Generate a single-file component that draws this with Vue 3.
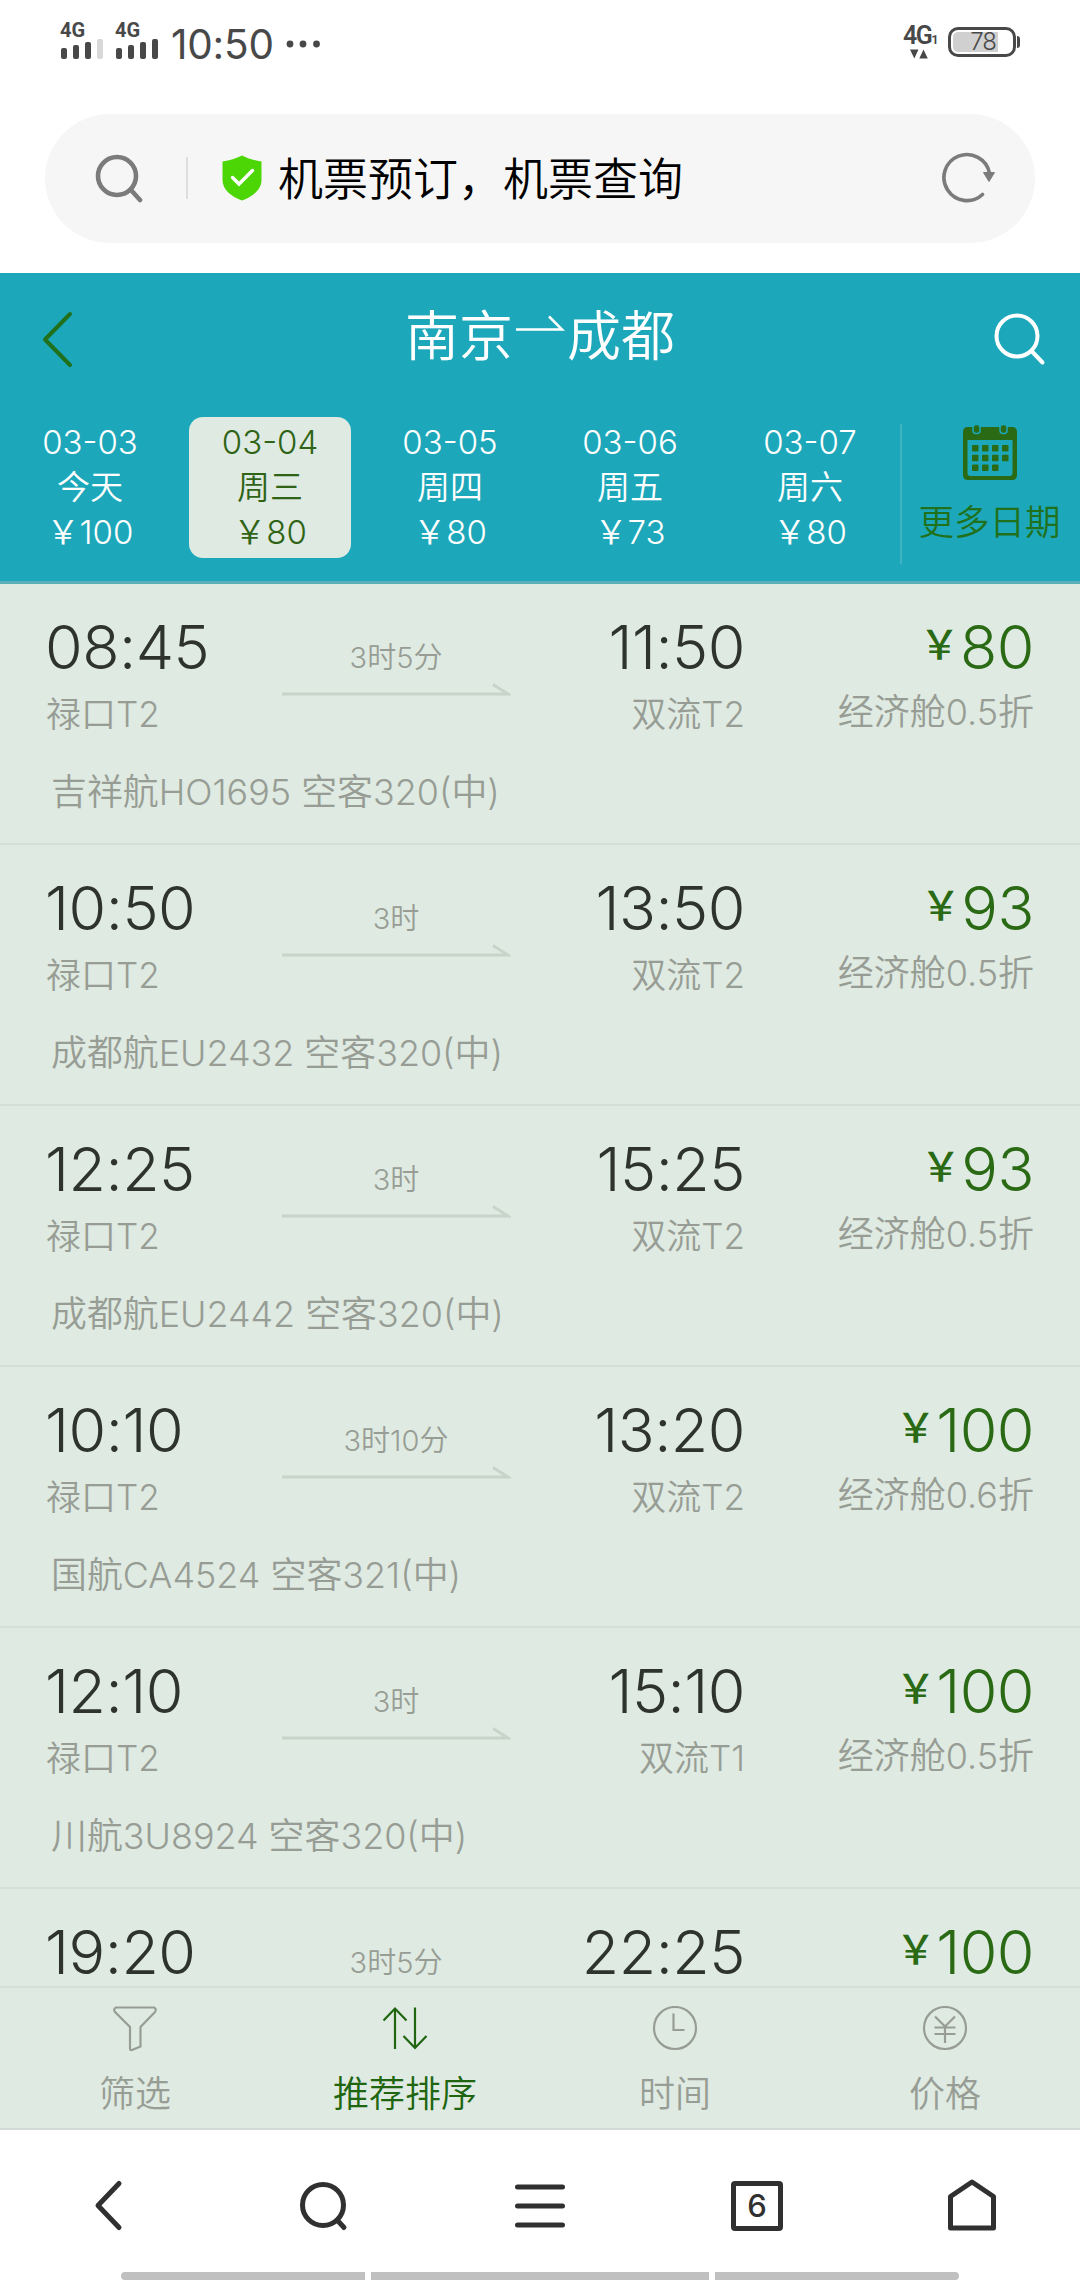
<template>
  <div class="tela">
    <!-- status bar -->
    <div class="status">
      <div class="sinal">
        <span>4G</span>
        <svg width="44" height="21" viewBox="0 0 44 21">
          <rect x="1" y="10" width="6" height="11" rx="2" />
          <rect x="13" y="7" width="6" height="14" rx="2" />
          <rect x="25" y="4" width="6" height="17" rx="2" />
          <rect x="37" y="1" width="6" height="20" rx="2" class="fraco" />
        </svg>
      </div>
      <div class="sinal segundo">
        <span>4G</span>
        <svg width="44" height="21" viewBox="0 0 44 21">
          <rect x="1" y="10" width="6" height="11" rx="2" />
          <rect x="13" y="7" width="6" height="14" rx="2" />
          <rect x="25" y="4" width="6" height="17" rx="2" />
          <rect x="37" y="1" width="6" height="20" rx="2" />
        </svg>
      </div>
      <div class="relogio">10:50</div>
      <svg class="pontos" width="34" height="8" viewBox="0 0 34 8">
        <circle cx="4" cy="4" r="3.4" />
        <circle cx="17" cy="4" r="3.4" />
        <circle cx="30.5" cy="4" r="3.4" />
      </svg>
      <div class="rede">
        <div class="rede-texto">4G<small>1</small></div>
        <svg width="18" height="10" viewBox="0 0 18 10">
          <path d="M0 0.5h8.5L4.3 9.5zM9.300 9.500h8.500L13.500 0.500z" />
        </svg>
      </div>
      <div class="bateria">
        <span>78</span>
      </div>
      <div class="polo"></div>
    </div>

    <!-- address bar -->
    <div class="barra">
      <svg class="lupa" width="50" height="50" viewBox="0 0 50 50" fill="none" stroke="#7b7b7b" stroke-width="4.600" stroke-linecap="round">
        <circle cx="22" cy="23" r="19" />
        <path d="M36 37L45 47" />
      </svg>
      <div class="divisor"></div>
      <svg class="escudo" width="40" height="46" viewBox="0 0 40 46">
        <path d="M20 0.500C14 3.500 8 5.500 0.500 6.500V25C0.500 35 10 42 20 45.500C30 42 39.500 35 39.500 25V6.500C32 5.500 26 3.500 20 0.500z" fill="#4cd606" />
        <path d="M10.500 22.500L17 29L30.500 15.500" fill="none" stroke="#fff" stroke-width="3.400" stroke-linecap="round" />
      </svg>
      <div class="endereco">机票预订，机票查询</div>
      <svg class="recarregar" width="54" height="52" viewBox="0 0 54 52">
        <path d="M40.500 42.500A23 23 0 1 1 47.500 21" fill="none" stroke="#7b7b7b" stroke-width="3.600" stroke-linecap="round" />
        <path d="M41.500 20.500H52.500L47 29.500z" fill="#7b7b7b" stroke="#7b7b7b" stroke-linejoin="round" />
      </svg>
    </div>

    <!-- header -->
    <div class="topo">
      <div class="titulo">
        <svg width="34" height="58" viewBox="0 0 34 58" fill="none" stroke="#20701c" stroke-width="4" stroke-linecap="round" stroke-linejoin="round">
          <path d="M29 4L4 29.500L29 55" />
        </svg>
        <h1>
          南京<svg width="54" height="54" viewBox="0 0 54 54" fill="none" stroke="#fff" stroke-width="2.500">
            <path d="M3 23.500H49L36 10.500" />
          </svg>成都
        </h1>
        <svg width="54" height="54" viewBox="0 0 54 54" fill="none" stroke="#fff" stroke-width="4" stroke-linecap="round">
          <circle cx="23" cy="24" r="20.500" />
          <path d="M38 39.500L48.500 50.500" />
        </svg>
      </div>
      <div class="datas">
        <div v-for="(d, i) in datas" :key="d.dia" class="data" :class="{ ativa: i === 1 }">
          <div>{{ d.dia }}</div>
          <div class="semana">{{ d.semana }}</div>
          <div>￥{{ d.preco }}</div>
        </div>
        <div class="mais">
          <svg width="54" height="56" viewBox="0 0 54 56">
            <path fill-rule="evenodd" d="M5 3H49Q54 3 54 8V51Q54 56 49 56H5Q0 56 0 51V8Q0 3 5 3zM4.500 16V49Q4.500 52 7.500 52H46.500Q49.500 52 49.500 49V16z" />
            <g stroke="#1ca8ba" stroke-width="1.500">
              <rect x="10" y="0.500" width="7" height="9" rx="3" />
              <rect x="37" y="0.500" width="7" height="9" rx="3" />
            </g>
            <rect v-for="n in 11" :key="n" :x="9 + ((n - 1) % 4) * 10" :y="21 + Math.floor((n - 1) / 4) * 9.700" width="6.500" height="6.500" rx="1" />
          </svg>
          <div>更多日期</div>
        </div>
      </div>
    </div>

    <!-- flights -->
    <div class="lista">
      <div v-for="v in voos" :key="v.saida" class="voo">
        <div>
          <div class="hora">{{ v.saida }}</div>
          <div v-if="v.aviao" class="local">禄口T2</div>
        </div>
        <div class="duracao">
          <div>{{ v.duracao }}</div>
          <svg v-if="v.aviao" width="230" height="14" viewBox="0 0 230 14" fill="none" stroke="#c8d3ca" stroke-width="2.800">
            <path d="M1 11H227L212 1.500" />
          </svg>
        </div>
        <div class="direita">
          <div class="hora">{{ v.chegada }}</div>
          <div v-if="v.aviao" class="local">双流{{ v.terminal }}</div>
        </div>
        <div class="direita">
          <div class="hora preco"><span>￥</span>{{ v.preco }}</div>
          <div v-if="v.aviao" class="local classe">经济舱{{ v.desconto }}折</div>
        </div>
        <div v-if="v.aviao" class="aviao">{{ v.aviao }}</div>
      </div>
    </div>

    <!-- filters -->
    <div class="filtros">
      <div>
        <svg width="46" height="46" viewBox="0 0 46 46">
          <path d="M4 1.500H42Q45 3 43 6L28.500 21V40.500L20 44Q18 44.500 18 42.500V21L3 6Q1 3 4 1.500z" />
        </svg>
        <span>筛选</span>
      </div>
      <div class="ativo">
        <svg width="46" height="46" viewBox="0 0 46 46">
          <path d="M1.500 14.500L13 2.500L24.500 14.500M13 2.500V43M21.500 30L33 42L44.500 30M33 42V1.500" />
        </svg>
        <span>推荐排序</span>
      </div>
      <div>
        <svg width="46" height="46" viewBox="0 0 46 46">
          <circle cx="23" cy="22" r="21" />
          <path d="M21.500 7.500V24H32.500" />
        </svg>
        <span>时间</span>
      </div>
      <div>
        <svg width="46" height="46" viewBox="0 0 46 46">
          <circle cx="23" cy="22" r="21" />
          <path d="M13 10.500L23 20.500L33 10.500M12.500 21.500H33.500M12.500 28H33.500M23 20.500V37" />
        </svg>
        <span>价格</span>
      </div>
    </div>

    <!-- browser navigation -->
    <div class="navegador">
      <svg width="60" height="60" viewBox="0 0 60 60">
        <path d="M41 7.500L20 29.500L41 51.500" />
      </svg>
      <svg width="60" height="60" viewBox="0 0 60 60">
        <circle cx="29" cy="29" r="20.500" />
        <path d="M43.500 44.500L50 51.500" />
      </svg>
      <svg width="60" height="60" viewBox="0 0 60 60">
        <path d="M7.500 11H52.500M7.500 30H52.500M7.500 49H52.500" />
      </svg>
      <div class="abas"><span>6</span></div>
      <svg width="60" height="60" viewBox="0 0 60 60">
        <path d="M8.500 52V20.500L30 6L51.500 20.500V52z" />
      </svg>
    </div>
    <div class="gestos">
      <i></i><i class="meio"></i><i></i>
    </div>
  </div>
</template>

<script setup>
const datas = [
  { dia: '03-03', semana: '今天', preco: 100 },
  { dia: '03-04', semana: '周三', preco: 80 },
  { dia: '03-05', semana: '周四', preco: 80 },
  { dia: '03-06', semana: '周五', preco: 73 },
  { dia: '03-07', semana: '周六', preco: 80 },
];

// o último voo só mostra a primeira linha
const voos = [
  { saida: '08:45', chegada: '11:50', duracao: '3时5分', terminal: 'T2', preco: 80, desconto: '0.5', aviao: '吉祥航HO1695 空客320(中)' },
  { saida: '10:50', chegada: '13:50', duracao: '3时', terminal: 'T2', preco: 93, desconto: '0.5', aviao: '成都航EU2432 空客320(中)' },
  { saida: '12:25', chegada: '15:25', duracao: '3时', terminal: 'T2', preco: 93, desconto: '0.5', aviao: '成都航EU2442 空客320(中)' },
  { saida: '10:10', chegada: '13:20', duracao: '3时10分', terminal: 'T2', preco: 100, desconto: '0.6', aviao: '国航CA4524 空客321(中)' },
  { saida: '12:10', chegada: '15:10', duracao: '3时', terminal: 'T1', preco: 100, desconto: '0.5', aviao: '川航3U8924 空客320(中)' },
  { saida: '19:20', chegada: '22:25', duracao: '3时5分', preco: 100 },
];
</script>

<style>
body {
  background: #fff;
}
</style>

<style scoped>
.tela {
  width: 1080px;
  height: 2280px;
  overflow: hidden;
  display: flex;
  flex-direction: column;
  background: #fff;
  font-family: Inter, 'Noto Sans CJK SC', sans-serif;
  font-weight: 350;
}

svg {
  flex: none;
  display: block;
}

/* status bar */
.status {
  height: 114px;
  padding: 0 60px;
  box-sizing: border-box;
  display: flex;
  align-items: flex-start;
  color: #484848;
  fill: #484848;
}

.sinal {
  padding-top: 20px;
}

.sinal span {
  display: block;
  height: 18px;
  line-height: 21px;
  font-family: Roboto, sans-serif;
  font-size: 20px;
  font-weight: 700;
}

.segundo {
  margin-left: 11px;
}

.fraco {
  fill: #d8d8d8;
}

.relogio {
  margin: 20px 0 0 12px;
  width: 104px;
  line-height: 50px;
  font-size: 40.5px;
  font-weight: 400;
  letter-spacing: -0.2px;
  white-space: nowrap;
}

.pontos {
  margin: 40px 0 0 11px;
}

.rede {
  margin: 24px 0 0 auto;
  width: 37px;
}

.rede-texto {
  height: 23px;
  line-height: 24px;
  font-family: Roboto, sans-serif;
  font-size: 25px;
  font-weight: 600;
  letter-spacing: -1.5px;
  white-space: nowrap;
}

.rede-texto small {
  font-size: 13px;
}

.rede svg {
  margin: 2px 0 0 7px;
}

.bateria {
  margin: 27px 0 0 8px;
  width: 68px;
  height: 30px;
  box-sizing: border-box;
  border: 3px solid #484848;
  border-radius: 10px;
  padding: 2px;
}

.bateria span {
  display: block;
  width: 45px;
  height: 20px;
  box-sizing: border-box;
  padding-right: 2px;
  border-radius: 5px 0 0 5px;
  background: #d0d0d0;
  text-align: right;
  line-height: 20px;
  font-size: 24px;
  letter-spacing: -1px;
}

.polo {
  margin: 36px 0 0 1px;
  width: 3px;
  height: 12px;
  border-radius: 0 3px 3px 0;
  background: #484848;
}

/* address bar */
.barra {
  height: 129px;
  margin: 0 45px 30px;
  border-radius: 65px;
  background: #f6f6f6;
  display: flex;
  align-items: center;
}

.lupa {
  margin-left: 50px;
}

.divisor {
  width: 2px;
  height: 42px;
  margin: 0 34px 0 41px;
  background: #dedede;
}

.endereco {
  flex: 1;
  margin-left: 16px;
  padding-bottom: 4px;
  font-size: 45px;
  color: #000;
}

.recarregar {
  margin-right: 39px;
}

/* header */
.topo {
  height: 312px;
  box-sizing: border-box;
  border-bottom: 3px solid #5cafb9;
  background: #1ca8ba;
  color: #fff;
}

.titulo {
  height: 132px;
  padding: 0 32px 0 41px;
  display: flex;
  align-items: center;
  justify-content: space-between;
}

.titulo h1 {
  margin: 0;
  padding: 0 0 12px 11px;
  display: flex;
  align-items: center;
  font-size: 54px;
  font-weight: 350;
}

.datas {
  display: flex;
  padding-top: 12px;
}

.data {
  width: 162px;
  height: 141px;
  margin: 0 9px;
  box-sizing: border-box;
  padding-top: 3px;
  border-radius: 14px;
  text-align: center;
  font-size: 33px;
  line-height: 45px;
}

.ativa {
  background: #dfeae2;
  color: #2f6416;
}

.mais {
  flex: 1;
  height: 140px;
  margin-top: 7px;
  padding-right: 3px;
  border-left: 2px solid #3fb3c4;
  display: flex;
  flex-direction: column;
  align-items: center;
  color: #20701c;
  fill: #2a6a14;
  font-size: 35.5px;
  line-height: 44px;
}

.mais div {
  margin-top: 21px;
}

/* flights */
.lista {
  height: 1402px;
  background: #dfeae2;
}

.voo {
  height: 261px;
  box-sizing: border-box;
  padding: 28px 46px 0;
  border-bottom: 2px solid #d4dfd8;
  display: grid;
  grid-template-columns: 200px 300px 199px 289px;
  grid-template-rows: 142px auto;
}

.voo:last-child {
  height: 97px;
  border-bottom: 0;
  grid-template-rows: auto;
}

.hora {
  margin-left: -1px;
  font-size: 61px;
  font-weight: 330;
  line-height: 70px;
  color: #2e332d;
  letter-spacing: -0.5px;
}

.local {
  margin-top: 10px;
  font-size: 35px;
  line-height: 44px;
  color: #979d94;
}

.direita {
  text-align: right;
}

.preco {
  display: flex;
  justify-content: flex-end;
  color: #2a6a14;
}

.preco span {
  margin-right: 1px;
  font-size: 40px;
  font-weight: 500;
  line-height: 65px;
}

.classe {
  margin-top: 8px;
  font-size: 36px;
}

.duracao {
  padding-top: 27px;
  display: flex;
  flex-direction: column;
  align-items: center;
  font-size: 29px;
  line-height: 38px;
  color: #979d94;
}

.duracao svg {
  margin-top: 6px;
}

.aviao {
  grid-column: 1 / -1;
  padding-left: 5px;
  font-size: 35.9px;
  line-height: 76px;
  color: #979d94;
}

/* filters */
.filtros {
  height: 144px;
  box-sizing: border-box;
  border-top: 2px solid #d4dfd8;
  border-bottom: 2px solid #d3d9d5;
  background: #dfeae2;
  display: flex;
}

.filtros div {
  width: 270px;
  padding-top: 18px;
  display: flex;
  flex-direction: column;
  align-items: center;
  color: #979d94;
  font-size: 36px;
  line-height: 44px;
}

.filtros svg {
  fill: none;
  stroke: currentColor;
  stroke-width: 2.200;
}

.filtros span {
  margin-top: 20px;
}

.filtros .ativo {
  color: #20650f;
}

/* browser navigation */
.navegador {
  height: 142px;
  display: flex;
  align-items: center;
  justify-content: space-around;
  padding: 10px 0 0;
  box-sizing: border-box;
}

.navegador svg {
  margin: 0 78px;
  fill: none;
  stroke: #303030;
  stroke-width: 5;
  stroke-linecap: round;
  stroke-linejoin: round;
}

.abas {
  flex: none;
  width: 52px;
  height: 50px;
  margin: 0 81px 0 83px;
  box-sizing: border-box;
  border: 5px solid #303030;
  border-radius: 4px;
  text-align: center;
  line-height: 39px;
  font-size: 31px;
  font-weight: 450;
  color: #303030;
}

.gestos {
  display: flex;
  justify-content: center;
  gap: 6px;
}

.gestos i {
  width: 244px;
  height: 8px;
  background: #c0c0c0;
}

.gestos .meio {
  width: 338px;
}

.gestos i:first-child {
  border-radius: 4px 0 0 4px;
}

.gestos i:last-child {
  border-radius: 0 4px 4px 0;
}
</style>
